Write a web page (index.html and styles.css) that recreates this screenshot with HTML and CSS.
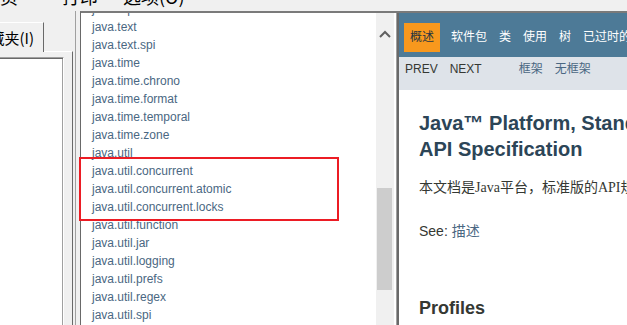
FILE: index.html
```html
<!DOCTYPE html>
<html lang="zh-cn">
<head>
    <meta charset="UTF-8">
    <title>Java Platform SE 8 - 帮助</title>
    <link rel="stylesheet" href="styles.css">
</head>
<body>
    <!-- barra de ferramentas (cortada no topo) -->
    <div class="toolbar">
        <div class="toolbar-row">
            <span class="tool tool-home">主页</span>
            <span class="tool tool-print">打印</span>
            <span class="tool tool-options">选项(O)</span>
        </div>
    </div>

    <div class="main">
        <!-- painel lateral -->
        <div class="sidebar">
            <div class="tab">藏夹(I)</div>
            <div class="panel">
                <div class="panel-box"></div>
            </div>
        </div>

        <!-- frames -->
        <div class="frames">
            <div class="pkg-frame">
                <div class="pkg-view">
                    <ul class="pkg-list">
                        <li><a href="#">java.sql</a></li>
                        <li><a href="#">java.text</a></li>
                        <li><a href="#">java.text.spi</a></li>
                        <li><a href="#">java.time</a></li>
                        <li><a href="#">java.time.chrono</a></li>
                        <li><a href="#">java.time.format</a></li>
                        <li><a href="#">java.time.temporal</a></li>
                        <li><a href="#">java.time.zone</a></li>
                        <li><a href="#">java.util</a></li>
                        <li><a href="#">java.util.concurrent</a></li>
                        <li><a href="#">java.util.concurrent.atomic</a></li>
                        <li><a href="#">java.util.concurrent.locks</a></li>
                        <li><a href="#">java.util.function</a></li>
                        <li><a href="#">java.util.jar</a></li>
                        <li><a href="#">java.util.logging</a></li>
                        <li><a href="#">java.util.prefs</a></li>
                        <li><a href="#">java.util.regex</a></li>
                        <li><a href="#">java.util.spi</a></li>
                        <li><a href="#">java.util.stream</a></li>
                    </ul>
                </div>
                <div class="scrollbar">
                    <svg class="scroll-up" width="12" height="8" viewBox="0 0 12 8">
                        <path d="M1 7 L6 2 L11 7" fill="none" stroke="#606060" stroke-width="2"/>
                    </svg>
                    <div class="scroll-thumb"></div>
                </div>
            </div>
            <div class="splitter"></div>
            <div class="doc-frame">
                <div class="top-nav">
                    <ul class="nav-list">
                        <li class="current">概述</li>
                        <li><a href="#">软件包</a></li>
                        <li><a href="#">类</a></li>
                        <li><a href="#">使用</a></li>
                        <li><a href="#">树</a></li>
                        <li><a href="#">已过时的</a></li>
                        <li><a href="#">索引</a></li>
                        <li><a href="#">帮助</a></li>
                    </ul>
                </div>
                <div class="sub-nav">
                    <ul class="sub-list">
                        <li>PREV</li>
                        <li>NEXT</li>
                    </ul>
                    <ul class="sub-list">
                        <li><a href="#">框架</a></li>
                        <li><a href="#">无框架</a></li>
                    </ul>
                </div>
                <div class="content">
                    <h1 class="title">Java™ Platform, Standard Edition 8<br>API Specification</h1>
                    <p class="block">本文档是Java平台，标准版的API规范。</p>
                    <p class="see">See: <a href="#">描述</a></p>
                    <h2 class="section">Profiles</h2>
                </div>
            </div>
        </div>
    </div>

    <!-- marcação vermelha -->
    <div class="highlight"></div>
</body>
</html>
```

FILE: styles.css
```css
body{ margin: 0; background-color: #f0f0f0; font-family: "Liberation Sans", Arial, "Noto Sans CJK SC", sans-serif; overflow: hidden; }
a{ color: #4a6782; text-decoration: none; }
ul{ list-style: none; margin: 0; padding: 0; }

/* toolbar */
.toolbar{ height: 11px; overflow: hidden; }
.toolbar-row{ display: flex; margin-top: -13px; font-family: "Noto Sans CJK SC", sans-serif; font-size: 18px; line-height: 18px; color: #000; white-space: nowrap; }
.tool-home{ margin-left: -18px; }
.tool-print{ margin-left: 44px; }
.tool-options{ margin-left: 25px; }

.main{ display: flex; height: calc(100vh - 11px); }

/* sidebar */
.sidebar{ width: 76px; border-right: 1px solid #a0a0a0; display: flex; flex-direction: column; padding-top: 11px; box-sizing: border-box; overflow: hidden; }
.tab{ position: relative; z-index: 1; margin-left: -20px; margin-bottom: -1px; width: 64px; height: 30px; box-sizing: border-box; background-color: #f0f0f0; border-top: 1px solid #fff; border-left: 1px solid #fff; border-right: 1px solid #696969; padding-right: 9px; text-align: right; font-family: "Noto Sans CJK SC", sans-serif; font-size: 15px; line-height: 29px; color: #000; white-space: nowrap; }
.panel{ flex: 1; width: 73px; box-sizing: border-box; border-top: 1px solid #fff; border-right: 1px solid #696969; padding: 5px 8px 0 0; display: flex; }
.panel-box{ flex: 1; background-color: #fff; border-top: 1px solid #a0a0a0; border-right: 1px solid #fff; box-shadow: inset 0 1px #696969, inset -1px 0 #a0a0a0; }

/* frames */
.frames{ flex: 1; margin-left: 4px; display: flex; border-top: 2px solid #7a7a7a; border-left: 1px solid #696969; overflow: hidden; min-width: 0; }
.pkg-frame{ width: 314px; flex-shrink: 0; display: flex; background-color: #fff; border-right: 1px solid #fff; box-sizing: border-box; }
.pkg-view{ flex: 1; overflow: hidden; }
.pkg-list{ margin-top: -13px; padding-left: 11px; font-size: 12px; line-height: 18px; white-space: nowrap; }
.scrollbar{ width: 18px; flex-shrink: 0; background-color: #f0f0f0; display: flex; flex-direction: column; align-items: flex-start; }
.scroll-up{ margin: 17px 0 0 3px; }
.scroll-thumb{ margin: 150px 0 0 1px; width: 15px; height: 102px; background-color: #cdcdcd; }
.splitter{ width: 4px; flex-shrink: 0; background: linear-gradient(to right, #fff 0 1px, #a0a0a0 1px 2px, #696969 2px 4px); }

/* documento */
.doc-frame{ flex: 1; min-width: 0; background-color: #fff; overflow: hidden; }
.top-nav{ height: 34px; padding-top: 10px; background-color: #4d7a97; overflow: hidden; font-size: 12px; }
.nav-list{ display: flex; white-space: nowrap; }
.nav-list li{ padding: 5px 6px; line-height: 19px; }
.nav-list a{ color: #fff; }
.nav-list .current{ margin: 0 5px; background-color: #f8981d; color: #253441; }
.sub-nav{ height: 33px; display: flex; background-color: #dee3e9; font-size: 12px; color: #353833; }
.sub-list{ display: flex; margin-right: 25px; white-space: nowrap; }
.sub-list li{ padding: 5px 6px; line-height: 15px; }

.content{ padding: 0 20px; white-space: nowrap; color: #353833; }
.title{ margin: 20px 0 0; font-size: 20px; line-height: 26px; color: #2c4557; }
.block{ margin: 16px 0 0; font-family: "Liberation Serif", "Noto Sans CJK SC", serif; font-size: 14px; line-height: 20px; }
.see{ margin: 23px 0 0; font-size: 14px; line-height: 20px; }
.section{ margin: 56px 0 0; font-size: 18px; line-height: 22px; }

/* marcação vermelha */
.highlight{ position: absolute; left: 79px; top: 157px; width: 260px; height: 64px; box-sizing: border-box; border: 2px solid #ec1c24; }
```
